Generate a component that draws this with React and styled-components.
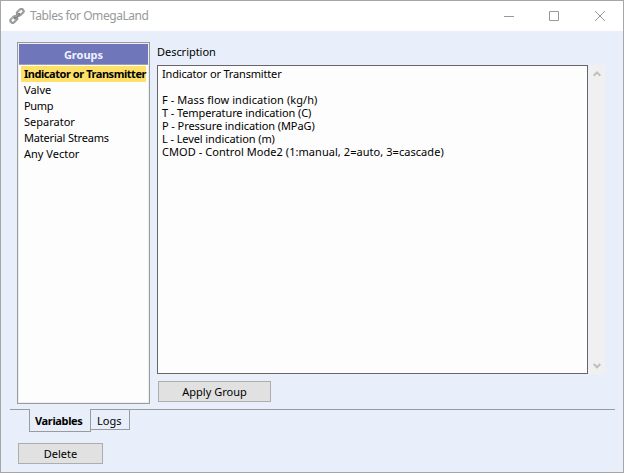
import React from "react";
import styled, { createGlobalStyle } from "styled-components";

const Global = createGlobalStyle`
  *, *::before, *::after { box-sizing: border-box; }
  body { margin: 0; overflow: hidden; }
`;

const Window = styled.main`
  width: 624px;
  height: 473px;
  display: flex;
  flex-direction: column;
  border: 1px solid #a7a5a6;
  background: #e8effa;
  color: #000;
  font: 11px/13px "Noto Sans", "Open Sans", sans-serif;
  white-space: nowrap;
`;

const TitleBar = styled.header`
  height: 30px;
  flex: none;
  display: flex;
  align-items: center;
  padding: 0 18px 0 8px;
  background: #fff;
  color: #999;
`;

const Title = styled.h1`
  flex: 1;
  margin: 0 0 0 5px;
  font-size: 12px;
  font-weight: 400;
  line-height: 16px;
  letter-spacing: ${(p) => p.$spacing}px;
`;

const Controls = styled.div`
  display: flex;
  gap: 35px;
`;

const Glyph = styled.svg`
  display: block;
  flex: none;
  fill: none;
`;

const CloseGlyph = styled(Glyph)`
  margin-left: 1px;
`;

const Workspace = styled.section`
  height: 378px;
  flex: none;
  display: flex;
  align-items: flex-start;
  gap: 7px;
  padding: 11px 18px 0 16px;
`;

const GroupPanel = styled.div`
  width: 133px;
  height: 362px;
  flex: none;
  padding: 1px;
  border: 1px solid #999b9d;
  background: #fdfdfd;
  box-shadow: inset 0 0 0 1px #eeeeee;
`;

const GroupHeader = styled.h2`
  height: 21px;
  margin: 0;
  padding-top: 4px;
  border-bottom: 1px solid #a1a1a5;
  background: #7076ba;
  color: #f0f2ff;
  font-size: 11px;
  line-height: 13px;
  text-align: center;
`;

const GroupList = styled.ul`
  margin: 1px 2px 0;
  padding: 0;
  list-style: none;
`;

const GroupItem = styled.li`
  height: 16px;
  padding-left: 3px;
  line-height: 16px;
  background: ${(p) => (p.$selected ? "#ffe169" : "transparent")};
  font-weight: ${(p) => (p.$selected ? 700 : 400)};
  letter-spacing: ${(p) => p.$spacing}px;
`;

const Details = styled.div`
  flex: 1;
  display: flex;
  flex-direction: column;
  align-items: flex-start;
`;

const Label = styled.label`
  height: 23px;
  padding-top: 3px;
  letter-spacing: ${(p) => p.$spacing}px;
`;

const DescriptionBox = styled.div`
  display: flex;
  gap: 1px;
`;

const DescriptionText = styled.div`
  width: 431px;
  height: 309px;
  padding: 1px 4px;
  border: 1px solid #666568;
  background: #fdfdfd;
`;

const Line = styled.div`
  height: 13px;
  letter-spacing: ${(p) => p.$spacing}px;
`;

const ScrollBar = styled.div`
  width: 16px;
  height: 309px;
  display: flex;
  flex-direction: column;
  justify-content: space-between;
  align-items: center;
  padding: 5px 1px 4px 0;
  background: #f0f0f0;
`;

const Button = styled.button`
  width: ${(p) => p.$width}px;
  height: 21px;
  margin: ${(p) => p.$margin};
  padding: 0 0 1px;
  border: 1px solid #adadad;
  background: #e1e1e1;
  color: inherit;
  font: inherit;
  letter-spacing: ${(p) => p.$spacing}px;
`;

const TabStrip = styled.nav`
  height: 34px;
  flex: none;
  display: flex;
  align-items: flex-start;
  margin: 0 8px 0 9px;
  padding-left: 19px;
  border-top: 1px solid #999b9e;
`;

const Tab = styled.div`
  width: ${(p) => p.$width}px;
  height: ${(p) => (p.$active ? 23 : 20)}px;
  margin-top: ${(p) => (p.$active ? -1 : 0)}px;
  padding: ${(p) => (p.$active ? "5px 0 0 5px" : "4px 0 0 6px")};
  border: solid #999b9e;
  border-width: ${(p) => (p.$active ? "0 1px 1px" : "0 1px 1px 0")};
  background: #e8effa;
  font-weight: ${(p) => (p.$active ? 700 : 400)};
  letter-spacing: ${(p) => p.$spacing}px;
`;

const groups = [
  ["Indicator or Transmitter", -0.45],
  ["Valve", 0],
  ["Pump", -0.3],
  ["Separator", 0],
  ["Material Streams", -0.18],
  ["Any Vector", 0],
];

const lines = [
  ["Indicator or Transmitter", -0.17],
  ["", 0],
  ["F - Mass flow indication (kg/h)", 0.08],
  ["T - Temperature indication (C)", -0.1],
  ["P - Pressure indication (MPaG)", -0.08],
  ["L - Level indication (m)", -0.09],
  ["CMOD - Control Mode2 (1:manual, 2=auto, 3=cascade)", 0.055],
];

function ChainIcon() {
  return (
    <Glyph width="16" height="16" viewBox="0 0 16 16">
      <g stroke="#9a9b9d" strokeWidth="2.2">
        <rect x="7.4" y="2.1" width="7.6" height="4.4" rx="2.2" transform="rotate(-43 11.2 4.3)" />
        <rect x="1" y="9.3" width="7.6" height="4.4" rx="2.2" transform="rotate(-43 4.8 11.5)" />
      </g>
      <path d="M5.8 10.3 10.2 5.9" stroke="#7f8183" strokeWidth="2.4" strokeLinecap="round" />
      <path d="M6.4 9.1 9.2 6.3M9.5 3.6 11.6 1.9M2 11.2 4 9.3" stroke="#c9cacc" strokeWidth=".8" />
    </Glyph>
  );
}

function ScrollArrow({ down }) {
  return (
    <Glyph width="8" height="8" viewBox="0 0 8 8">
      <path d={down ? "M.7 2 4 5.3 7.3 2" : "M.7 5.7 4 2.4 7.3 5.7"} stroke="#bfbfbf" strokeWidth="2" />
    </Glyph>
  );
}

export default function App() {
  return (
    <>
      <Global />
      <Window>
        <TitleBar>
          <ChainIcon />
          <Title $spacing={-0.44}>Tables for OmegaLand</Title>
          <Controls>
            <Glyph width="10" height="10"><path d="M0 5.5h10" stroke="#999" /></Glyph>
            <Glyph width="10" height="10"><path d="M.5.5h9v9h-9z" stroke="#999" /></Glyph>
            <CloseGlyph width="10" height="10"><path d="m0 0 10 10m0-10-10 10" stroke="#999" /></CloseGlyph>
          </Controls>
        </TitleBar>
        <Workspace>
          <GroupPanel>
            <GroupHeader>Groups</GroupHeader>
            <GroupList>
              {groups.map(([name, spacing], i) => (
                <GroupItem key={name} $selected={i === 0} $spacing={spacing}>{name}</GroupItem>
              ))}
            </GroupList>
          </GroupPanel>
          <Details>
            <Label $spacing={-0.04}>Description</Label>
            <DescriptionBox>
              <DescriptionText>
                {lines.map(([text, spacing], i) => (
                  <Line key={i} $spacing={spacing}>{text}</Line>
                ))}
              </DescriptionText>
              <ScrollBar>
                <ScrollArrow />
                <ScrollArrow down />
              </ScrollBar>
            </DescriptionBox>
            <Button $width={113} $margin="7px 0 0 1px" $spacing={0}>Apply Group</Button>
          </Details>
        </Workspace>
        <TabStrip>
          <Tab $active $width={62} $spacing={-0.35}>Variables</Tab>
          <Tab $width={39} $spacing={0}>Logs</Tab>
        </TabStrip>
        <Button $width={85} $margin="0 0 0 17px" $spacing={0}>Delete</Button>
      </Window>
    </>
  );
}
